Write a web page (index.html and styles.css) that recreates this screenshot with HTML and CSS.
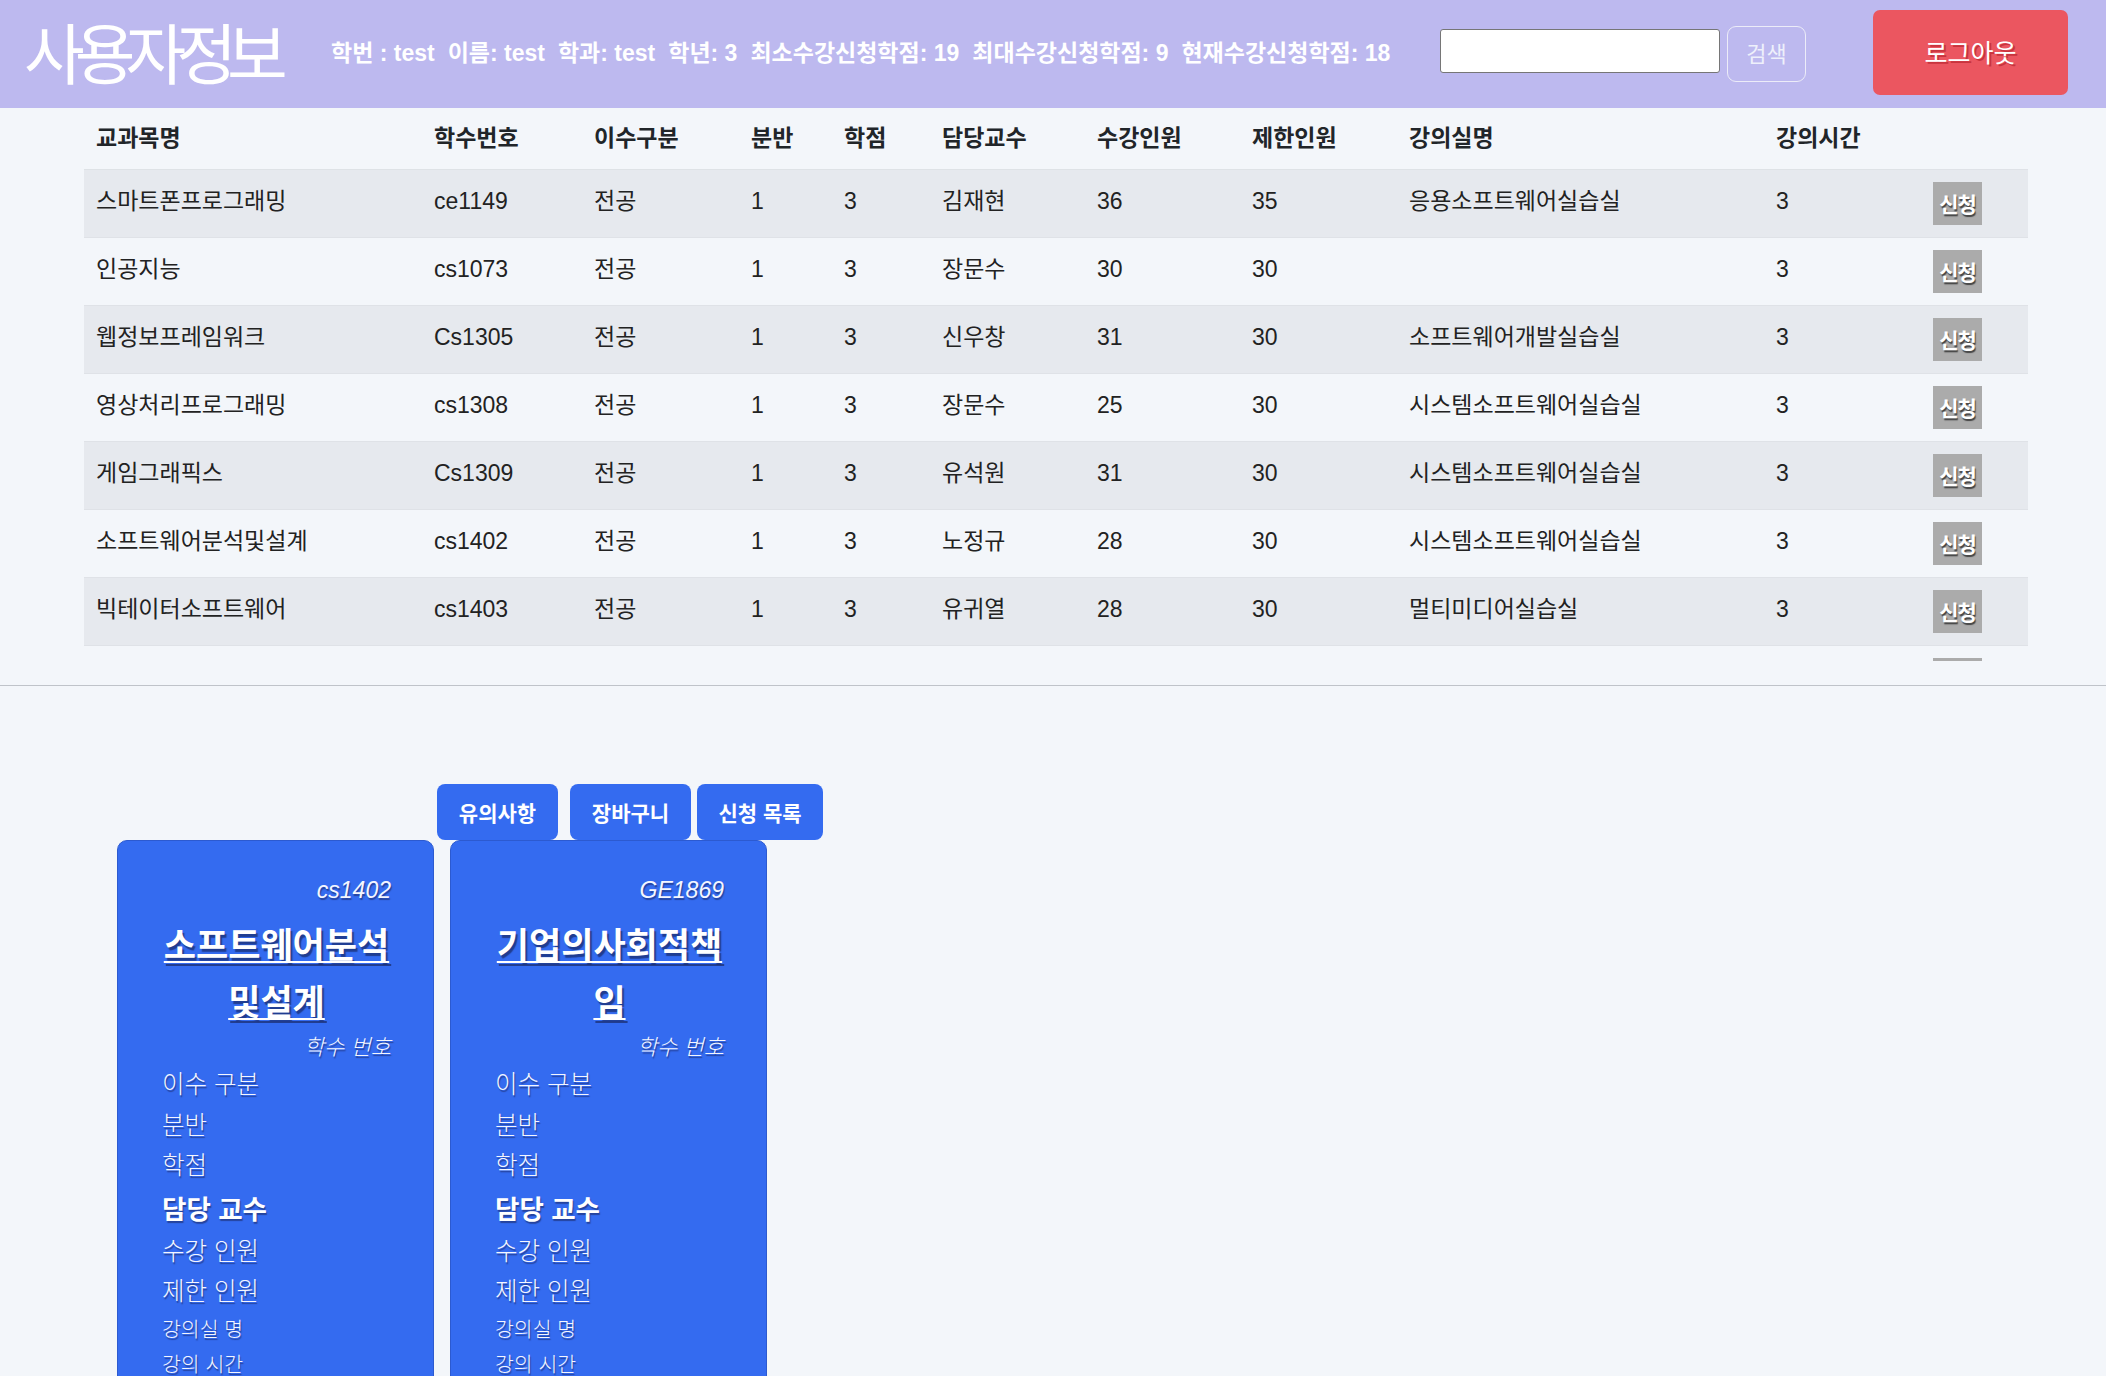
FILE: index.html
```html
<!DOCTYPE html>
<html lang="ko">
<head>
<meta charset="utf-8">
<title>사용자정보</title>
<link rel="stylesheet" href="styles.css">
</head>
<body>
<header class="topbar">
  <h1 class="title">사용자정보</h1>
  <div class="info">
    <span>학번 : test</span>
    <span>이름: test</span>
    <span>학과: test</span>
    <span>학년: 3</span>
    <span>최소수강신청학점: 19</span>
    <span>최대수강신청학점: 9</span>
    <span>현재수강신청학점: 18</span>
  </div>
  <form class="search">
    <input class="search-input" type="text">
    <button class="search-btn" type="button">검색</button>
  </form>
  <button class="logout" type="button">로그아웃</button>
</header>

<div class="table-wrap">
  <table class="courses">
    <colgroup>
      <col class="c1"><col class="c2"><col class="c3"><col class="c4"><col class="c5"><col class="c6"><col class="c7"><col class="c8"><col class="c9"><col class="c10"><col class="c11">
    </colgroup>
    <thead>
      <tr>
        <th>교과목명</th><th>학수번호</th><th>이수구분</th><th>분반</th><th>학점</th><th>담당교수</th><th>수강인원</th><th>제한인원</th><th>강의실명</th><th>강의시간</th>
      </tr>
    </thead>
    <tbody>
      <tr><td>스마트폰프로그래밍</td><td>ce1149</td><td>전공</td><td>1</td><td>3</td><td>김재현</td><td>36</td><td>35</td><td>응용소프트웨어실습실</td><td>3</td><td><button class="apply" type="button">신청</button></td></tr>
      <tr><td>인공지능</td><td>cs1073</td><td>전공</td><td>1</td><td>3</td><td>장문수</td><td>30</td><td>30</td><td></td><td>3</td><td><button class="apply" type="button">신청</button></td></tr>
      <tr><td>웹정보프레임워크</td><td>Cs1305</td><td>전공</td><td>1</td><td>3</td><td>신우창</td><td>31</td><td>30</td><td>소프트웨어개발실습실</td><td>3</td><td><button class="apply" type="button">신청</button></td></tr>
      <tr><td>영상처리프로그래밍</td><td>cs1308</td><td>전공</td><td>1</td><td>3</td><td>장문수</td><td>25</td><td>30</td><td>시스템소프트웨어실습실</td><td>3</td><td><button class="apply" type="button">신청</button></td></tr>
      <tr><td>게임그래픽스</td><td>Cs1309</td><td>전공</td><td>1</td><td>3</td><td>유석원</td><td>31</td><td>30</td><td>시스템소프트웨어실습실</td><td>3</td><td><button class="apply" type="button">신청</button></td></tr>
      <tr><td>소프트웨어분석및설계</td><td>cs1402</td><td>전공</td><td>1</td><td>3</td><td>노정규</td><td>28</td><td>30</td><td>시스템소프트웨어실습실</td><td>3</td><td><button class="apply" type="button">신청</button></td></tr>
      <tr><td>빅테이터소프트웨어</td><td>cs1403</td><td>전공</td><td>1</td><td>3</td><td>유귀열</td><td>28</td><td>30</td><td>멀티미디어실습실</td><td>3</td><td><button class="apply" type="button">신청</button></td></tr>
      <tr class="peek"><td></td><td></td><td></td><td></td><td></td><td></td><td></td><td></td><td></td><td></td><td><button class="apply" type="button" aria-label="신청"></button></td></tr>
    </tbody>
  </table>
</div>

<hr class="divider">

<nav class="tabs">
  <button class="tab tab-first" type="button">유의사항</button>
  <button class="tab" type="button">장바구니</button>
  <button class="tab tab-last" type="button">신청 목록</button>
</nav>

<section class="cards">
  <article class="card">
    <div class="code">cs1402</div>
    <h2 class="name">소프트웨어분석및설계</h2>
    <div class="label">학수 번호</div>
    <div class="row r-md">이수 구분</div>
    <div class="row r-md">분반</div>
    <div class="row r-md">학점</div>
    <div class="row r-bold">담당 교수</div>
    <div class="row r-md">수강 인원</div>
    <div class="row r-md">제한 인원</div>
    <div class="row r-sm">강의실 명</div>
    <div class="row r-sm">강의 시간</div>
  </article>
  <article class="card">
    <div class="code">GE1869</div>
    <h2 class="name">기업의사회적책임</h2>
    <div class="label">학수 번호</div>
    <div class="row r-md">이수 구분</div>
    <div class="row r-md">분반</div>
    <div class="row r-md">학점</div>
    <div class="row r-bold">담당 교수</div>
    <div class="row r-md">수강 인원</div>
    <div class="row r-md">제한 인원</div>
    <div class="row r-sm">강의실 명</div>
    <div class="row r-sm">강의 시간</div>
  </article>
</section>
</body>
</html>
```

FILE: styles.css
```css
* { box-sizing: border-box; }

html, body {
  margin: 0;
  padding: 0;
}

body {
  background: #f3f6fa;
  font-family: "Liberation Sans", "Noto Sans CJK KR", sans-serif;
  color: #212529;
  overflow: hidden;
}

/* ---------- top bar ---------- */
.topbar {
  height: 108px;
  background: #bdb9ef;
  display: flex;
  align-items: center;
  padding: 0 38px 0 24px;
}

.title {
  margin: 0 0 8px 0;
  font-family: "Noto Sans CJK KR", sans-serif;
  font-weight: 400;
  font-size: 66px;
  line-height: 1;
  letter-spacing: -10px;
  color: #ffffff;
  width: 258px;
  white-space: nowrap;
}

.info {
  margin: 0 0 6px 49px;
  display: flex;
  gap: 13px;
  color: #ffffff;
  font-weight: 700;
  font-size: 23px;
  white-space: nowrap;
  font-family: "Liberation Sans", "Noto Sans CJK KR", sans-serif;
}

.search {
  margin-left: auto;
  display: flex;
  align-items: center;
}

.search-input {
  width: 280px;
  height: 44px;
  border: 1px solid #767676;
  border-radius: 3px;
  background: #ffffff;
  margin: 0 0 6px 0;
}

.search-btn {
  width: 79px;
  height: 56px;
  margin-left: 7px;
  background: transparent;
  border: 1px solid #ececf8;
  border-radius: 9px;
  color: #eef0fb;
  font-family: "Noto Sans CJK KR", sans-serif;
  font-size: 22px;
  padding: 0 0 5px 0;
}

.logout {
  margin-left: 67px;
  width: 195px;
  height: 85px;
  margin-bottom: 4px;
  background: #eb5660;
  border: none;
  border-radius: 7px;
  color: #ffffff;
  font-family: "Noto Sans CJK KR", sans-serif;
  font-size: 25px;
  text-shadow: 2px 2px 0 #c9343e;
  padding: 0 0 3px 0;
}

/* ---------- table ---------- */
.table-wrap {
  height: 553px;
  overflow: hidden;
  padding-left: 84px;
}

.courses {
  width: 1944px;
  table-layout: fixed;
  border-collapse: collapse;
  font-size: 23px;
  line-height: 30px;
}

.c1 { width: 338px; }
.c2 { width: 160px; }
.c3 { width: 157px; }
.c4 { width: 93px; }
.c5 { width: 98px; }
.c6 { width: 155px; }
.c7 { width: 155px; }
.c8 { width: 157px; }
.c9 { width: 367px; }
.c10 { width: 157px; }
.c11 { width: 107px; }

.courses th {
  height: 61px;
  text-align: left;
  font-weight: 700;
  padding: 0 12px;
  border-bottom: 1px solid #dee2e6;
  vertical-align: middle;
}

.courses td {
  height: 68px;
  padding: 0 12px 5px 12px;
  border-top: 1px solid #dfe2e7;
  vertical-align: middle;
  white-space: nowrap;
  color: #222;
}

.courses td:last-child {
  padding-bottom: 0;
}

.courses tbody tr:nth-child(odd) td {
  background: #e6e9ee;
}

.courses tbody tr.peek td {
  background: transparent;
}

.apply {
  display: block;
  width: 49px;
  height: 43px;
  background: #ababab;
  border: none;
  padding: 0;
  color: #ffffff;
  font-family: "Noto Sans CJK KR", sans-serif;
  font-weight: 700;
  font-size: 21px;
  letter-spacing: -1px;
  text-shadow: 1px 2px 1px #444;
}

/* ---------- divider ---------- */
.divider {
  margin: 24px 0 0 0;
  border: none;
  border-top: 1px solid #bfc3c9;
  height: 0;
}

/* ---------- tabs ---------- */
.tabs {
  margin: 98px 0 0 437px;
  display: flex;
  gap: 6px;
  height: 56px;
}

.tab {
  height: 56px;
  padding: 0 17px;
  min-width: 121px;
  background: #346bf0;
  border: none;
  border-radius: 8px;
  color: #ffffff;
  font-family: "Noto Sans CJK KR", sans-serif;
  font-weight: 700;
  font-size: 21px;
}

.tab-first { margin-right: 6px; }
.tab-last { min-width: 126px; }

/* ---------- cards ---------- */
.cards {
  display: flex;
  gap: 16px;
  margin-left: 117px;
  align-items: flex-start;
}

.card {
  width: 317px;
  height: 600px;
  background: #346bf0;
  border: 1px solid #2c5ad0;
  border-radius: 10px 10px 0 0;
  padding: 34px 42px 0 44px;
  color: #f4f6ff;
  font-family: "Noto Sans CJK KR", sans-serif;
  text-shadow: 1px 2px 1px rgba(25, 35, 90, 0.55);
}

.code {
  text-align: right;
  font-style: italic;
  font-weight: 300;
  font-size: 23px;
  line-height: 30px;
  font-family: "Liberation Sans", "Noto Sans CJK KR", sans-serif;
}

.name {
  margin: 9px -4px 0 -4px;
  text-align: center;
  font-size: 35px;
  line-height: 57px;
  font-weight: 700;
  color: #ffffff;
  text-decoration: underline;
  text-decoration-thickness: 2px;
  text-underline-offset: 3px;
  text-shadow: 2px 3px 1px rgba(20, 30, 80, 0.6);
}

.label {
  text-align: right;
  font-style: italic;
  font-weight: 300;
  font-size: 22px;
  line-height: 28px;
  margin-top: 3px;
}

.row {
  font-weight: 300;
}

.label + .row { margin-top: 4px; }

.r-md {
  font-size: 24.5px;
  line-height: 40.5px;
}

.r-bold {
  font-size: 26.5px;
  line-height: 45px;
  font-weight: 700;
  color: #ffffff;
}

.r-sm {
  font-size: 20.5px;
  line-height: 35px;
}
```
